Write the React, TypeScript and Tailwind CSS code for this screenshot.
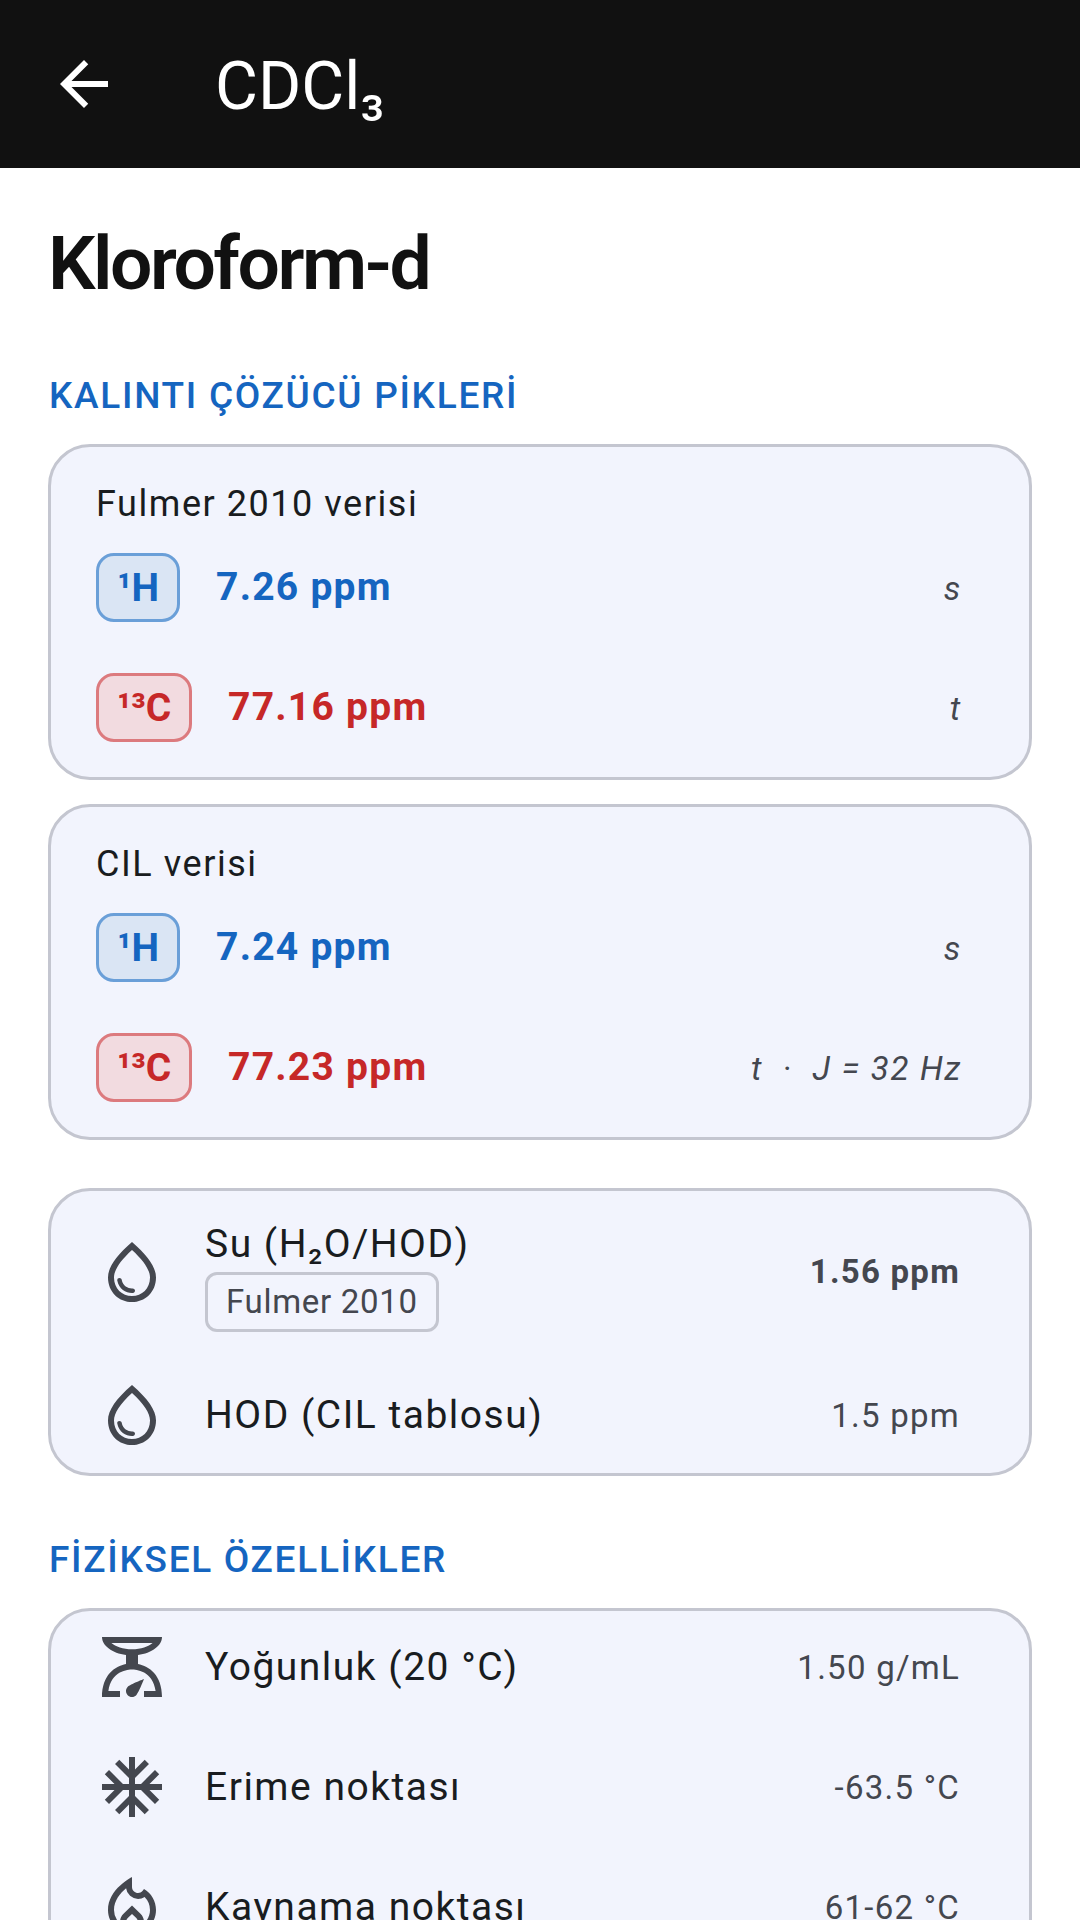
import { MdArrowBack, MdAcUnit, MdOutlineWaterDrop, MdOutlineScale, MdOutlineLocalFireDepartment } from "react-icons/md";

function Card({ children, className = "" }: { children: React.ReactNode; className?: string }) {
  return (
    <div className={`mx-[48px] rounded-[42px] border-[3px] border-[#c4c6d0] bg-[#f2f4fd] ${className}`}>
      {children}
    </div>
  );
}

function SectionLabel({ children, className = "" }: { children: React.ReactNode; className?: string }) {
  return (
    <h2 className={`pl-[49px] text-[37px] leading-[48px] font-medium tracking-[1.7px] text-[#1565c0] ${className}`}>
      {children}
    </h2>
  );
}

function PeakRow({ nucleus, value, note, kind }: { nucleus: string; value: string; note: string; kind: "h" | "c" }) {
  const isH = kind === "h";
  return (
    <div className="flex h-[120px] items-center">
      <span
        className={`flex h-[69px] items-center justify-center rounded-[18px] border-[3px] pt-[3px] text-[39px] font-bold ${
          isH
            ? "w-[84px] border-[#6a9fd8] bg-[#dae5f4] text-[#1565c0]"
            : "w-[96px] border-[#dc7a7e] bg-[#f2dbe0] text-[#c62828]"
        }`}
      >
        {nucleus}
      </span>
      <span className={`ml-[36px] text-[39px] font-bold tracking-[1.25px] ${isH ? "text-[#1565c0]" : "text-[#c62828]"}`}>{value}</span>
      <span className="ml-auto pt-[4px] pr-[22px] text-[33px] tracking-[1.7px] text-[#44474f] italic whitespace-pre">{note}</span>
    </div>
  );
}

function PeakCard({ source, rows }: { source: string; rows: { nucleus: string; value: string; note: string; kind: "h" | "c" }[] }) {
  return (
    <Card className="h-[336px] px-[45px] pt-[33px]">
      <p className="text-[36px] leading-[48px] tracking-[1.55px] text-[#191c20]">{source}</p>
      <div className="-mt-[1px]">
        {rows.map((r) => (
          <PeakRow key={r.nucleus} {...r} />
        ))}
      </div>
    </Card>
  );
}

function InfoRow({
  icon,
  label,
  value,
  tag,
  strong,
  className = "",
}: {
  icon: React.ReactNode;
  label: string;
  value: string;
  tag?: string;
  strong?: boolean;
  className?: string;
}) {
  return (
    <div className={`flex items-center px-[45px] ${className}`}>
      <span className={`flex h-[72px] w-[72px] shrink-0 items-center justify-center text-[#44474f] ${tag ? "mb-[6px]" : ""}`}>{icon}</span>
      <div className="ml-[37px] flex flex-col items-start">
        <span className="text-[39px] leading-[54px] tracking-[1.5px] text-[#191c20]">{label}</span>
        {tag && (
          <span className="mt-[1px] rounded-[12px] border-[3px] border-[#c4c6d0] px-[18px] text-[33px] leading-[54px] tracking-[0.7px] text-[#44474f]">
            {tag}
          </span>
        )}
      </div>
      <span className={`ml-auto pr-[24px] text-[33px] tracking-[1.25px] text-[#44474f] ${strong ? "pb-[5px] font-bold" : "pt-[2px]"}`}>{value}</span>
    </div>
  );
}

export default function App() {
  return (
    <div className="h-[1920px] w-[1080px] overflow-hidden bg-white font-['Roboto',sans-serif]">
      <header className="flex h-[168px] items-center bg-[#111111] pl-[48px] text-white">
        <MdArrowBack size={72} />
        <h1 className="mt-[4px] ml-[95px] text-[66px] font-normal">CDCl₃</h1>
      </header>

      <h1 className="mt-[45px] px-[48px] text-[75px] leading-[100px] font-semibold tracking-[-2.5px] text-[#111111]">Kloroform-d</h1>

      <SectionLabel className="mt-[59px]">KALINTI ÇÖZÜCÜ PİKLERİ</SectionLabel>

      <div className="mt-[24px] flex flex-col gap-[24px]">
        <PeakCard
          source="Fulmer 2010 verisi"
          rows={[
            { nucleus: "¹H", value: "7.26 ppm", note: "s", kind: "h" },
            { nucleus: "¹³C", value: "77.16 ppm", note: "t", kind: "c" },
          ]}
        />
        <PeakCard
          source="CIL verisi"
          rows={[
            { nucleus: "¹H", value: "7.24 ppm", note: "s", kind: "h" },
            { nucleus: "¹³C", value: "77.23 ppm", note: "t  ·  J = 32 Hz", kind: "c" },
          ]}
        />
      </div>

      <Card className="mt-[48px] h-[288px] pt-[26px]">
        <InfoRow icon={<MdOutlineWaterDrop size={72} />} label="Su (H₂O/HOD)" value="1.56 ppm" tag="Fulmer 2010" strong />
        <InfoRow icon={<MdOutlineWaterDrop size={72} />} label="HOD (CIL tablosu)" value="1.5 ppm" className="mt-[47px]" />
      </Card>

      <SectionLabel className="mt-[60px]">FİZİKSEL ÖZELLİKLER</SectionLabel>

      <Card className="mt-[24px] h-[400px] pt-[20px]">
        <InfoRow icon={<MdOutlineScale size={72} />} label="Yoğunluk (20 °C)" value="1.50 g/mL" />
        <InfoRow icon={<MdAcUnit size={72} />} label="Erime noktası" value="-63.5 °C" className="mt-[48px]" />
        <InfoRow icon={<MdOutlineLocalFireDepartment size={72} />} label="Kaynama noktası" value="61-62 °C" className="mt-[48px]" />
      </Card>
    </div>
  );
}
